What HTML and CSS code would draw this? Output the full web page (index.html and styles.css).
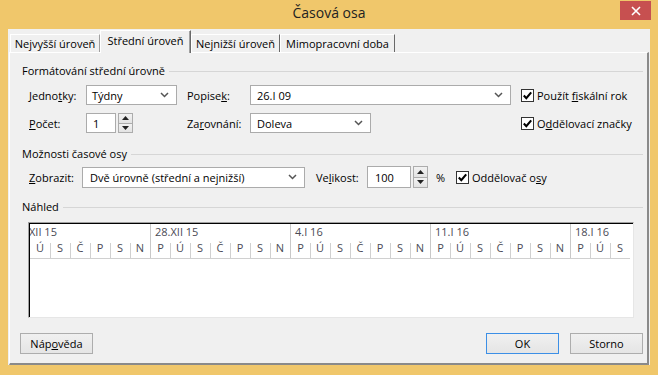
FILE: index.html
```html
<!DOCTYPE html>
<html>
<head>
	<meta charset="utf-8">
	<title>Časová osa</title>
	<link rel="stylesheet" href="styles.css">
</head>
<body>
<div class="window">
	<div class="titlebar">
		<span></span>
		<span class="title">Časová osa</span>
		<span class="close"><svg width="10" height="10" viewBox="0 0 10 10"><path d="M1 1 L9 9 M9 1 L1 9" stroke="#fff" stroke-width="1.6"/></svg></span>
	</div>
	<div class="client">
		<div class="tabs">
			<div class="tab t1">Nejvyšší úroveň</div>
			<div class="tab t2 active">Střední úroveň</div>
			<div class="tab t3">Nejnižší úroveň</div>
			<div class="tab t4">Mimopracovní doba</div>
		</div>
		<div class="panel">
			<div class="group-title first"><span>Formátování střední úrovně</span></div>

			<div class="grid-row row1">
				<label>Jedno<u>t</u>ky:</label>
				<div class="select w-units"><span>Týdny</span><svg class="chev" width="9" height="6" viewBox="0 0 9 6"><path d="M1 1 L4.5 4.5 L8 1" fill="none" stroke="#555" stroke-width="1.5"/></svg></div>
				<span></span>
				<label>Popise<u>k</u>:</label>
				<div class="select w-label"><span>26.I 09</span><svg class="chev" width="9" height="6" viewBox="0 0 9 6"><path d="M1 1 L4.5 4.5 L8 1" fill="none" stroke="#555" stroke-width="1.5"/></svg></div>
				<span></span>
				<div class="check"><svg width="13" height="13" viewBox="0 0 13 13"><rect x="0.5" y="0.5" width="12" height="12" fill="#fff" stroke="#333"/><path d="M2.8 6.6 L5.3 9.2 L10.2 3.4" fill="none" stroke="#000" stroke-width="2.1"/></svg><span>Použít <u>f</u>iskální rok</span></div>
			</div>

			<div class="grid-row row2">
				<label><u>P</u>očet:</label>
				<div class="spin-field">
					<div class="input w-count">1</div>
					<div class="spinner">
						<div class="spin-btn"><svg width="7" height="4" viewBox="0 0 7 4"><path d="M0 4 L3.5 0 L7 4 Z" fill="#222"/></svg></div>
						<div class="spin-btn"><svg width="7" height="4" viewBox="0 0 7 4"><path d="M0 0 L3.5 4 L7 0 Z" fill="#222"/></svg></div>
					</div>
				</div>
				<span></span>
				<label>Za<u>r</u>ovnání:</label>
				<div class="select w-align"><span>Doleva</span><svg class="chev" width="9" height="6" viewBox="0 0 9 6"><path d="M1 1 L4.5 4.5 L8 1" fill="none" stroke="#555" stroke-width="1.5"/></svg></div>
				<span></span>
				<div class="check"><svg width="13" height="13" viewBox="0 0 13 13"><rect x="0.5" y="0.5" width="12" height="12" fill="#fff" stroke="#333"/><path d="M2.8 6.6 L5.3 9.2 L10.2 3.4" fill="none" stroke="#000" stroke-width="2.1"/></svg><span>O<u>d</u>dělovací značky</span></div>
			</div>

			<div class="group-title second"><span>Možnosti časové osy</span></div>

			<div class="flex-row row3">
				<label class="l-show"><u>Z</u>obrazit:</label>
				<div class="select w-show"><span>Dvě úrovně (střední a nejnižší)</span><svg class="chev" width="9" height="6" viewBox="0 0 9 6"><path d="M1 1 L4.5 4.5 L8 1" fill="none" stroke="#555" stroke-width="1.5"/></svg></div>
				<label class="l-size">Ve<u>l</u>ikost:</label>
				<div class="spin-field">
					<div class="input w-size">100</div>
					<div class="spinner tall">
						<div class="spin-btn"><svg width="7" height="4" viewBox="0 0 7 4"><path d="M0 4 L3.5 0 L7 4 Z" fill="#222"/></svg></div>
						<div class="spin-btn"><svg width="7" height="4" viewBox="0 0 7 4"><path d="M0 0 L3.5 4 L7 0 Z" fill="#222"/></svg></div>
					</div>
				</div>
				<span class="pct">%</span>
				<div class="check"><svg width="13" height="13" viewBox="0 0 13 13"><rect x="0.5" y="0.5" width="12" height="12" fill="#fff" stroke="#333"/><path d="M2.8 6.6 L5.3 9.2 L10.2 3.4" fill="none" stroke="#000" stroke-width="2.1"/></svg><span>Oddělovač o<u>s</u>y</span></div>
			</div>

			<div class="group-title third"><span>Náhled</span></div>

			<div class="preview">
				<div class="scale">
					<div class="weeks">
						<div class="week w-first"><span class="cut">XII 15</span></div>
						<div class="week">28.XII 15</div>
						<div class="week">4.I 16</div>
						<div class="week">11.I 16</div>
						<div class="week w-last">18.I 16</div>
					</div>
					<div class="days">
						<span class="day first">Ú</span><span class="day">S</span><span class="day">Č</span><span class="day">P</span><span class="day">S</span><span class="day">N</span>
						<span class="day ws">P</span><span class="day">Ú</span><span class="day">S</span><span class="day">Č</span><span class="day">P</span><span class="day">S</span><span class="day">N</span>
						<span class="day ws">P</span><span class="day">Ú</span><span class="day">S</span><span class="day">Č</span><span class="day">P</span><span class="day">S</span><span class="day">N</span>
						<span class="day ws">P</span><span class="day">Ú</span><span class="day">S</span><span class="day">Č</span><span class="day">P</span><span class="day">S</span><span class="day">N</span>
						<span class="day ws">P</span><span class="day">Ú</span><span class="day">S</span>
					</div>
				</div>
			</div>

			<div class="buttons">
				<div class="btn">Náp<u>o</u>věda</div>
				<span class="spacer"></span>
				<div class="btn default">OK</div>
				<div class="btn">Storno</div>
			</div>
		</div>
	</div>
</div>
</body>
</html>
```

FILE: styles.css
```css
* {
	box-sizing: border-box;
}
html, body {
	margin: 0;
	padding: 0;
}
body {
	width: 658px;
	height: 375px;
	overflow: hidden;
	font-family: "Open Sans", "Noto Sans", sans-serif;
	font-size: 11px;
	color: #000;
}
u {
	text-decoration: underline;
	text-underline-offset: 1px;
}
.window {
	width: 658px;
	height: 375px;
	background-color: #F0C76B;
	display: flex;
	flex-direction: column;
}

/* title bar */
.titlebar {
	height: 29px;
	display: grid;
	grid-template-columns: 1fr auto 1fr;
	align-items: start;
}
.title {
	font-size: 14px;
	line-height: 26px;
	color: #222;
}
.close {
	justify-self: end;
	margin: 1px 7px 0 0;
	width: 31px;
	height: 19px;
	background-color: #C75050;
	display: flex;
	align-items: center;
	justify-content: center;
}

/* client */
.client {
	margin: 0 8px;
	height: 336px;
	background-color: #F0F0F0;
	padding: 0 1px 0 1px;
	display: flex;
	flex-direction: column;
}
.tabs {
	height: 23px;
	display: flex;
	align-items: flex-end;
	padding-left: 1px;
}
.tab {
	height: 19px;
	line-height: 17px;
	text-align: center;
	background-color: #F0F0F0;
	border-top: 1px solid #fff;
	border-left: 1px solid #fff;
	border-right: 1px solid #a0a0a0;
	margin-bottom: -1px;
	white-space: nowrap;
}
.tab.t1 { width: 90px; }
.tab.t2 { width: 91px; }
.tab.t3 { width: 89px; }
.tab.t4 { width: 115px; }
.tab.active {
	height: 23px;
	line-height: 19px;
	position: relative;
	z-index: 1;
	border-right: 1px solid #696969;
	box-shadow: inset -1px 0 0 #a0a0a0;
	padding-bottom: 2px;
}
.tab.t3, .tab.t4 {
	border-right-color: #696969;
}
.panel {
	flex: 1;
	border-top: 1px solid #fff;
	border-left: 1px solid #fff;
	border-right: 2px solid #8a8a8a;
	border-bottom: 2px solid #8a8a8a;
	display: flex;
	flex-direction: column;
}

/* group headings */
.group-title {
	display: flex;
	align-items: center;
	margin-left: 12px;
	margin-right: 4px;
	height: 16px;
	line-height: 16px;
}
.group-title::after {
	content: "";
	flex: 1;
	height: 1px;
	margin-left: 4px;
	background-color: #d6d6d6;
}
.group-title.first { margin-top: 10px; }
.group-title.second { margin-top: 13px; }
.group-title.third { margin-top: 11px; }

/* form rows */
.grid-row {
	display: grid;
	grid-template-columns: 57px 91px 10px 63px 261px 10px auto;
	align-items: center;
	margin-left: 19px;
	height: 20px;
}
.row1 { margin-top: 6px; }
.row2 { margin-top: 8px; }
.flex-row {
	display: flex;
	align-items: center;
	margin-left: 19px;
	margin-top: 4px;
	height: 22px;
}
label {
	white-space: nowrap;
}
.select, .input {
	height: 20px;
	background-color: #fff;
	border: 1px solid #ababab;
	display: flex;
	align-items: center;
	white-space: nowrap;
}
.select {
	justify-content: space-between;
	padding: 0 7px 0 5px;
}
.select .chev {
	flex: none;
}
.w-units { width: 91px; }
.w-label { width: 261px; padding-left: 6px; }
.w-align { width: 121px; padding-left: 6px; }
.input {
	padding-left: 6px;
}
.w-count { width: 30px; }
.spin-field {
	display: flex;
	align-items: center;
}
.spinner {
	margin-left: 2px;
	width: 15px;
	height: 20px;
	display: flex;
	flex-direction: column;
}
.spinner.tall {
	height: 22px;
}
.spin-btn {
	flex: 1;
	border: 1px solid #acacac;
	background: linear-gradient(#f2f2f2, #e3e3e3);
	display: flex;
	align-items: center;
	justify-content: center;
}
.spin-btn + .spin-btn {
	border-top: none;
}
.check {
	display: flex;
	align-items: center;
	white-space: nowrap;
}
.check svg {
	flex: none;
	margin-right: 3px;
}

.l-show { width: 53px; }
.w-show { width: 223px; height: 21px; padding-left: 7px; }
.l-size { width: 51px; margin-left: 11px; }
.w-size { width: 44px; height: 22px; padding-left: 7px; }
.pct { margin-left: 8px; width: 20px; }

/* preview */
.preview {
	margin: 7px 0 0 18px;
	width: 606px;
	height: 96px;
	background-color: #fff;
	border-top: 1px solid #a0a0a0;
	border-left: 1px solid #a0a0a0;
	border-right: 1px solid #e6e6e6;
	border-bottom: 1px solid #e6e6e6;
	box-shadow: inset 1px 1px 0 #000;
	padding: 1px 0 0 1px;
	overflow: hidden;
}
.scale {
	color: #4a4a55;
	width: 600px;
}
.weeks {
	display: flex;
	height: 16px;
	line-height: 15px;
}
.week {
	width: 140px;
	padding-left: 4px;
	border-left: 1px solid #c8c8c8;
	white-space: nowrap;
}
.week.w-first {
	width: 120px;
	border-left: none;
	padding-left: 0;
	overflow: hidden;
}
.week.w-first .cut {
	margin-left: -1px;
}
.week.w-last {
	width: 60px;
}
.days {
	display: flex;
	height: 19px;
	border-bottom: 1px solid #d0d0d0;
}
.day {
	width: 20px;
	text-align: center;
	line-height: 16px;
	background: linear-gradient(#d0d0d0, #d0d0d0) left 3px / 1px 15px no-repeat;
}
.day.first {
	background: none;
}
.day.ws {
	background: none;
	border-left: 1px solid #c8c8c8;
}

/* buttons */
.buttons {
	display: flex;
	margin: 15px 4px 0 10px;
}
.spacer {
	flex: 1;
}
.btn {
	width: 73px;
	height: 21px;
	line-height: 19px;
	text-align: center;
	border: 1px solid #adadad;
	background: linear-gradient(#f0f0f0, #e5e5e5);
}
.btn.default {
	border-color: #3c8fe6;
	margin-right: 11px;
}
```
